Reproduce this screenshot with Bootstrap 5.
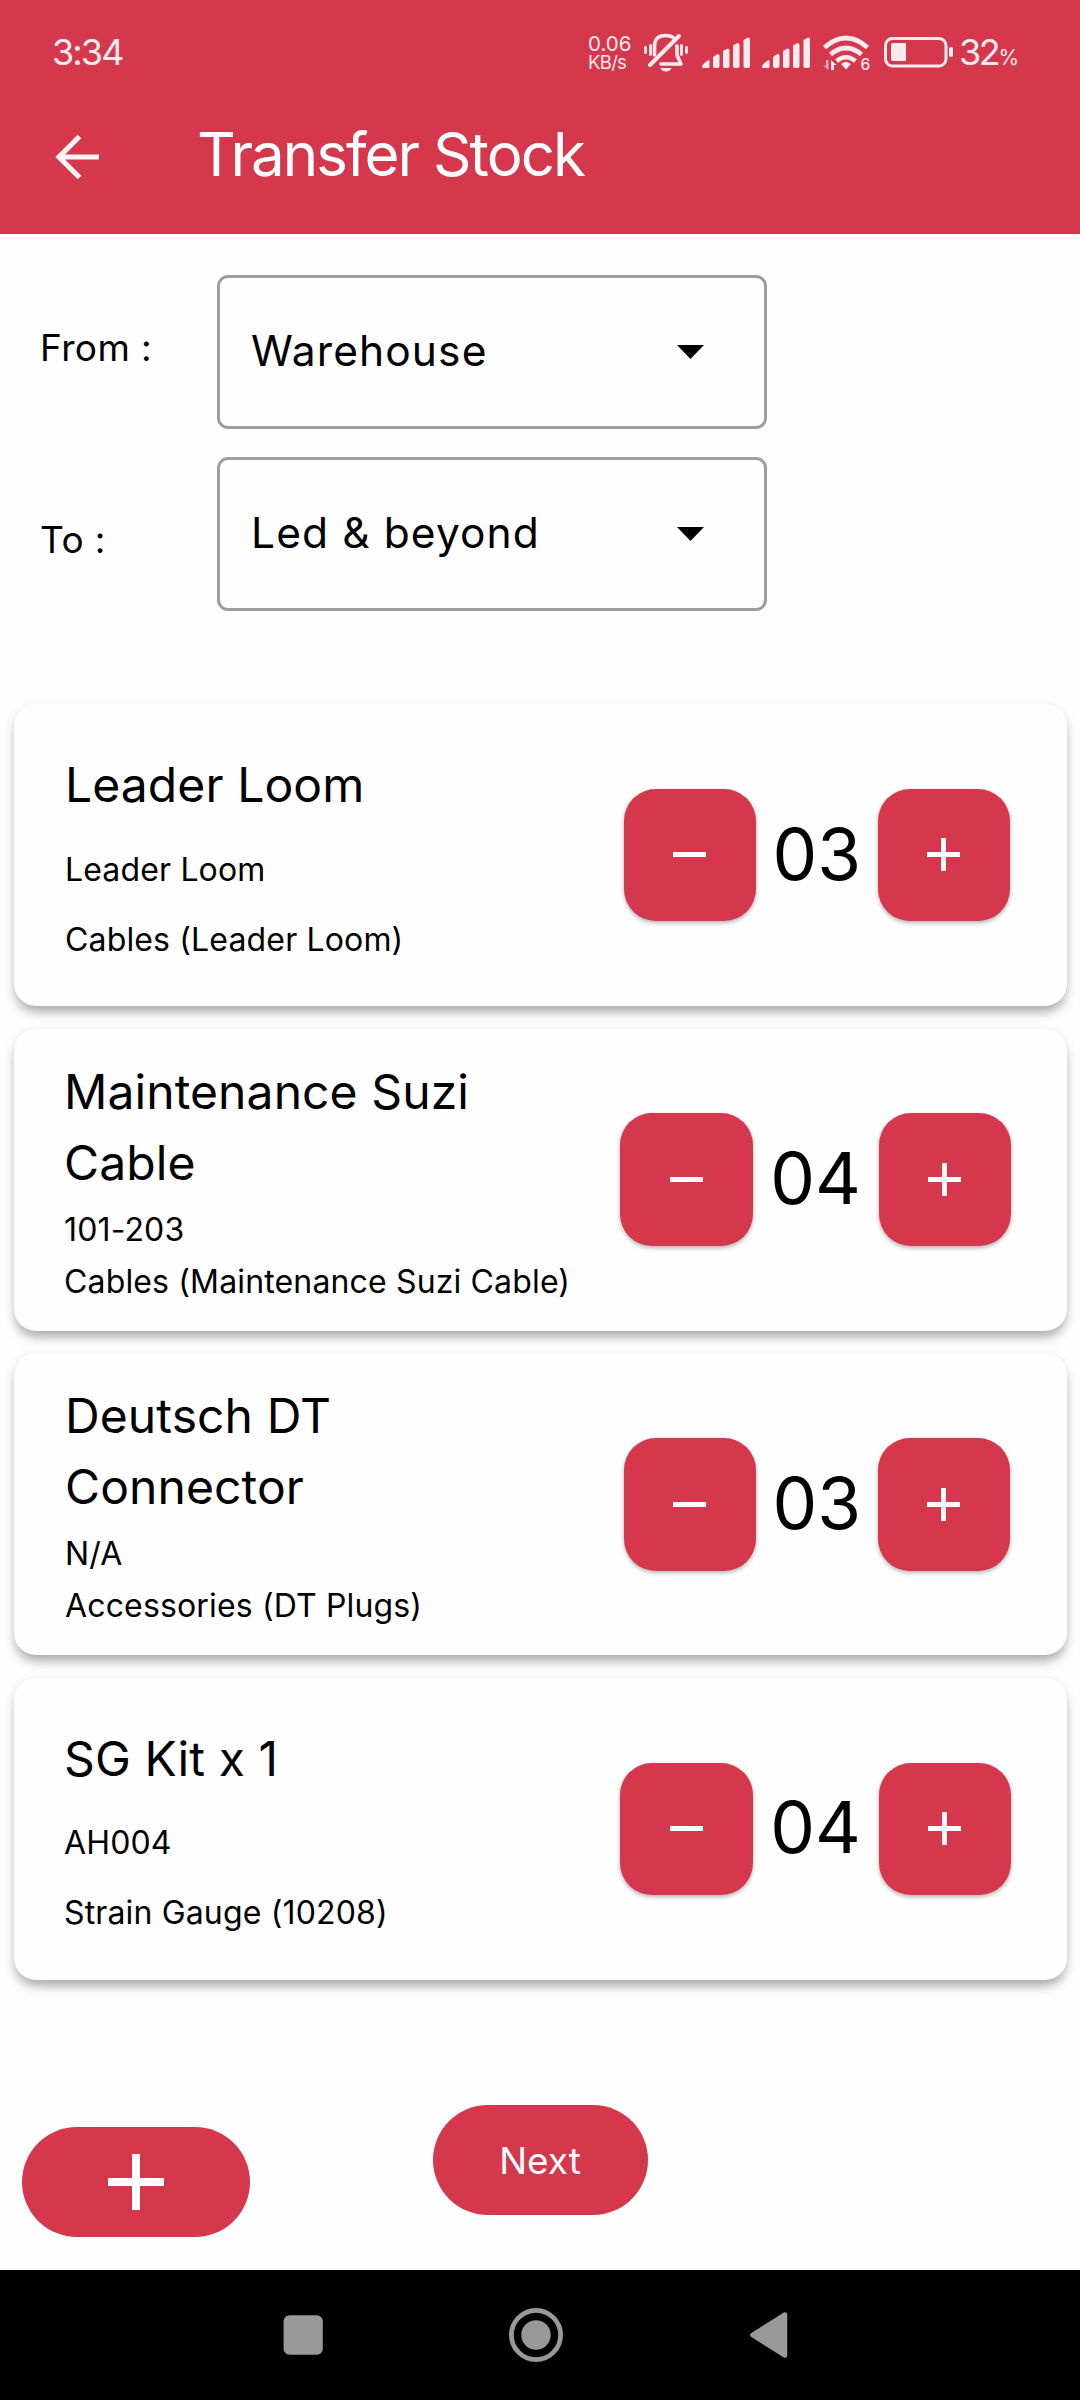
<!DOCTYPE html>
<html lang="en">
<head>
<meta charset="utf-8">
<meta name="viewport" content="width=device-width, initial-scale=1">
<title>Transfer Stock</title>
<link href="https://cdn.jsdelivr.net/npm/bootstrap@5.3.0/dist/css/bootstrap.min.css" rel="stylesheet">
<style>
:root { --brand: #d5384c; }
body { font-family: Inter, "Liberation Sans", sans-serif; font-weight: 400; color: #000; background: #fefefe; }
svg { display: block; flex: none; }
.screen { width: 1080px; height: 2400px; overflow: hidden; }
.top-area { height: 234px; background: var(--brand); }
.status-row { height: 104px; color: #fdeaec; padding-left: 52px; }
.clock { font-size: 36px; letter-spacing: -1.9px; line-height: 104px; width: 536px; }
.net-speed { font-size: 20.5px; line-height: 18px; width: 52px; padding-top: 35px; }
.net-speed .unit { font-size: 18.5px; letter-spacing: -.7px; }
.battery-level { font-size: 36px; letter-spacing: -2.4px; line-height: 104px; margin-left: 3px; }
.battery-level span { font-size: 21px; letter-spacing: 0; }
.app-title { font-size: 60px; line-height: 100px; letter-spacing: -1.95px; color: #fff; margin: 0 0 0 95px; font-weight: 400; }
.form-area { padding: 41px 0 0 40px; height: 470px; }
.field-label { width: 177px; font-size: 37px; line-height: 56px; letter-spacing: .4px; }
.select-box { width: 550px; height: 154px; border: 3px solid #9e9e9e; border-radius: 11px; padding: 0 60px 3px 31px; font-size: 42.5px; letter-spacing: 1.1px; background: transparent; color: #000; }
.select-box svg { margin-top: 3px; }
.item-list { padding: 0 13px 0 14px; gap: 22.67px; }
.item-card { height: 302px; border: 0; border-radius: 22px; background: #fefefe; box-shadow: 0 9px 12px -3px rgba(0,0,0,.27), 0 3px 11px rgba(0,0,0,.12); padding: 0 56px 0 50px; }
.item-card.odd { padding: 0 57px 0 51px; }
.item-text { padding-top: 45px; white-space: nowrap; }
.item-text.two-line { padding-top: 27px; }
.item-title { font-size: 48px; line-height: 71px; letter-spacing: .1px; font-weight: 400; margin: 0 0 23.5px; }
.item-sub { font-size: 32px; line-height: 52px; letter-spacing: .15px; margin: 0 0 18px; }
.two-line .item-title { margin-bottom: 6px; }
.two-line .item-sub { margin-bottom: 0; }
.step-btn { width: 132.4px; height: 132.4px; border-radius: 32px; border: 0; padding: 0; background: var(--brand); box-shadow: 0 2px 4px rgba(0,0,0,.3); }
.qty { width: 126px; font-size: 71px; line-height: 132px; padding-bottom: 3px; }
.odd .qty { width: 121.6px; }
.actions { padding: 125px 0 0 22px; height: 290px; gap: 182.5px; }
.pill { height: 110px; border: 0; background: var(--brand); color: #fff; border-radius: 55px; padding: 0; }
.pill:hover, .step-btn:hover { background: var(--brand); }
.pill-add { width: 228px; margin-top: 22px; }
.pill-next { width: 215px; font-size: 37px; padding-top: 1px; }
.sys-nav { height: 130px; background: #000; }
</style>
</head>
<body>
<div class="screen d-flex flex-column">
  <header class="top-area">
    <div class="status-row d-flex align-items-start">
      <div class="clock">3:34</div>
      <div class="net-speed">0.06<br><span class="unit">KB/s</span></div>
      <!-- Muted bell -->
      <svg width="60" height="104" viewBox="640 0 60 104" fill="none" stroke="#fdeaec" stroke-linecap="round" stroke-linejoin="round">
        <path d="M654.5 55V47C654.5 38 659 35.5 665.5 35.500C670 35.500 673 37 674.500 39M677 46V55L681 64H661" stroke-width="3.6"/>
        <path d="M679 36L650 65" stroke-width="4"/>
        <path d="M645.500 47.500V52.500M686.500 47.500V52.500M650.500 45.500V54.500M681.500 45.500V54.500" stroke-width="2.8"/>
        <path d="M660.500 68H671.500Q670 71.500 666 71.500T660.500 68Z" fill="#fdeaec" stroke="none"/>
      </svg>
      <!-- Signal strength, SIM 1 and SIM 2 -->
      <svg width="120" height="104" viewBox="700 0 120 104" fill="#fdeaec">
        <g id="bars"><path d="M702 66.500Q702 64 708.500 60Q709.500 60 709.500 61V66.500Q709.500 68 708 68H703.500Q702 68 702 66.500Z"/><path d="M713 57L717.500 54Q719.500 54 719.500 56V66Q719.500 68 717.500 68H715Q713 68 713 66Z"/><path d="M723 51L727.500 48.500Q729.500 48.500 729.500 50.500V66Q729.500 68 727.500 68H725Q723 68 723 66Z"/><path d="M733 45.500L737.500 43Q739.500 43 739.500 45V66Q739.500 68 737.500 68H735Q733 68 733 66Z"/><path d="M743.500 40L748 37.500Q750 37.500 750 39.500V66Q750 68 748 68H745.500Q743.500 68 743.500 66Z"/></g>
        <use href="#bars" x="60"/>
      </svg>
      <!-- Wi-Fi 6 -->
      <svg width="60" height="104" viewBox="820 0 60 104">
        <g fill="none" stroke="#fdeaec" stroke-width="4.6"><path d="M824.500 47.500Q846 28.500 867.500 47.500"/><path d="M830.500 54.500Q846 41.500 861.500 54.500"/><path d="M836.500 61Q846 53.500 855.500 61"/></g>
        <path d="M841 64Q846 60 851 64L846 69.500Z" fill="#fdeaec"/>
        <path d="M828.500 60V70L823 65.500H826V60Z" fill="#f0a3ad"/>
        <path d="M831 70V60L836.500 65H834V70Z" fill="#fdeaec"/>
        <text x="860.500" y="70" font-size="15.500" font-weight="500" fill="#fdeaec">6</text>
      </svg>
      <!-- Battery -->
      <svg width="76" height="104" viewBox="880 0 76 104" fill="#fdeaec">
        <rect x="885.500" y="38.500" width="60.500" height="27.500" rx="7" fill="none" stroke="#fdeaec" stroke-width="3"/>
        <path d="M893 43H906V61H893Q891 61 891 59V45Q891 43 893 43Z"/>
        <rect x="949" y="47" width="4" height="10" rx="1.800"/>
      </svg>
      <div class="battery-level">32<span>%</span></div>
    </div>
    <div class="d-flex align-items-start">
      <svg width="102" height="130" viewBox="0 104 102 130" fill="none" stroke="#f8f4f4" stroke-width="5.200"><path d="M99 157H59M79.500 136.500L59 157L79.500 177.500"/></svg>
      <h1 class="app-title">Transfer Stock</h1>
    </div>
  </header>

  <section class="form-area d-flex flex-column">
    <div class="d-flex align-items-center mb-4 pb-1">
      <div class="field-label pb-2">From :</div>
      <button type="button" class="select-box d-flex align-items-center justify-content-between"><span>Warehouse</span><svg width="27" height="14" viewBox="0 0 27 14"><path d="M0 0H27L13.500 14Z"/></svg></button>
    </div>
    <div class="d-flex align-items-center">
      <div class="field-label pt-2 mt-1">To :</div>
      <button type="button" class="select-box d-flex align-items-center justify-content-between"><span>Led &amp; beyond</span><svg width="27" height="14" viewBox="0 0 27 14"><path d="M0 0H27L13.500 14Z"/></svg></button>
    </div>
  </section>

  <main class="item-list d-flex flex-column">
    <article class="card item-card odd flex-row justify-content-between">
      <div class="item-text">
        <h2 class="item-title">Leader Loom</h2>
        <p class="item-sub">Leader Loom</p>
        <p class="item-sub">Cables (Leader Loom)</p>
      </div>
      <div class="d-flex align-items-center">
        <button type="button" class="btn step-btn d-flex align-items-center justify-content-center" aria-label="Decrease"><svg width="33" height="33" viewBox="0 0 33 33" stroke="#fff" stroke-width="4.800"><path d="M0 16.500H33"/></svg></button>
        <div class="qty text-center">03</div>
        <button type="button" class="btn step-btn d-flex align-items-center justify-content-center" aria-label="Increase"><svg width="33" height="33" viewBox="0 0 33 33" stroke="#fff" stroke-width="4.800"><path d="M0 16.500H33M16.500 0V33"/></svg></button>
      </div>
    </article>
    <article class="card item-card flex-row justify-content-between">
      <div class="item-text two-line">
        <h2 class="item-title">Maintenance Suzi<br>Cable</h2>
        <p class="item-sub">101-203</p>
        <p class="item-sub">Cables (Maintenance Suzi Cable)</p>
      </div>
      <div class="d-flex align-items-center">
        <button type="button" class="btn step-btn d-flex align-items-center justify-content-center" aria-label="Decrease"><svg width="33" height="33" viewBox="0 0 33 33" stroke="#fff" stroke-width="4.800"><path d="M0 16.500H33"/></svg></button>
        <div class="qty text-center">04</div>
        <button type="button" class="btn step-btn d-flex align-items-center justify-content-center" aria-label="Increase"><svg width="33" height="33" viewBox="0 0 33 33" stroke="#fff" stroke-width="4.800"><path d="M0 16.500H33M16.500 0V33"/></svg></button>
      </div>
    </article>
    <article class="card item-card odd flex-row justify-content-between">
      <div class="item-text two-line">
        <h2 class="item-title">Deutsch DT<br>Connector</h2>
        <p class="item-sub">N/A</p>
        <p class="item-sub">Accessories (DT Plugs)</p>
      </div>
      <div class="d-flex align-items-center">
        <button type="button" class="btn step-btn d-flex align-items-center justify-content-center" aria-label="Decrease"><svg width="33" height="33" viewBox="0 0 33 33" stroke="#fff" stroke-width="4.800"><path d="M0 16.500H33"/></svg></button>
        <div class="qty text-center">03</div>
        <button type="button" class="btn step-btn d-flex align-items-center justify-content-center" aria-label="Increase"><svg width="33" height="33" viewBox="0 0 33 33" stroke="#fff" stroke-width="4.800"><path d="M0 16.500H33M16.500 0V33"/></svg></button>
      </div>
    </article>
    <article class="card item-card flex-row justify-content-between">
      <div class="item-text">
        <h2 class="item-title">SG Kit x 1</h2>
        <p class="item-sub">AH004</p>
        <p class="item-sub">Strain Gauge (10208)</p>
      </div>
      <div class="d-flex align-items-center">
        <button type="button" class="btn step-btn d-flex align-items-center justify-content-center" aria-label="Decrease"><svg width="33" height="33" viewBox="0 0 33 33" stroke="#fff" stroke-width="4.800"><path d="M0 16.500H33"/></svg></button>
        <div class="qty text-center">04</div>
        <button type="button" class="btn step-btn d-flex align-items-center justify-content-center" aria-label="Increase"><svg width="33" height="33" viewBox="0 0 33 33" stroke="#fff" stroke-width="4.800"><path d="M0 16.500H33M16.500 0V33"/></svg></button>
      </div>
    </article>
  </main>

  <div class="actions d-flex align-items-start">
    <button type="button" class="btn pill pill-add d-flex align-items-center justify-content-center" aria-label="Add item"><svg width="56" height="56" viewBox="0 0 56 56" stroke="#fff" stroke-width="8"><path d="M0 28H56M28 0V56"/></svg></button>
    <button type="button" class="btn pill pill-next">Next</button>
  </div>

  <nav class="sys-nav">
    <svg width="1080" height="130" viewBox="0 2270 1080 130" fill="#999">
      <rect x="283.600" y="2315.300" width="39.200" height="39.400" rx="6"/>
      <circle cx="536" cy="2335" r="24.600" fill="none" stroke="#999" stroke-width="4.800"/>
      <circle cx="536" cy="2335" r="14.700"/>
      <path d="M752.500 2335L785 2314.500V2355.500Z" stroke="#999" stroke-width="4.500" stroke-linejoin="round"/>
    </svg>
  </nav>
</div>
<script src="https://cdn.jsdelivr.net/npm/bootstrap@5.3.0/dist/js/bootstrap.bundle.min.js"></script>
</body>
</html>
